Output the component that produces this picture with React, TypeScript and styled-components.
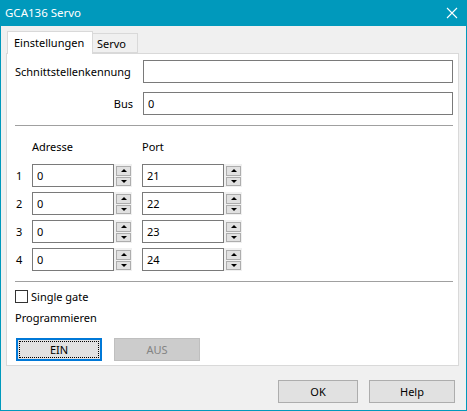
import React, { FC } from "react";
import styled, { createGlobalStyle } from "styled-components";

const GlobalStyle = createGlobalStyle`
  html, body {
    margin: 0;
    padding: 0;
    background: #ffffff;
  }
  body {
    font-family: "Noto Sans", "Liberation Sans", sans-serif;
    font-size: 11px;
    color: #000;
  }
`;

const ADDRESSES = [
  { nr: 1, adresse: "0", port: "21" },
  { nr: 2, adresse: "0", port: "22" },
  { nr: 3, adresse: "0", port: "23" },
  { nr: 4, adresse: "0", port: "24" },
];

const SpinField: FC<{ value: string }> = ({ value }) => (
  <SpinWrap>
    <Input type="text" defaultValue={value} $width={82} />
    <Spinner>
      <SpinButton>
        <Arrow $dir="up" />
      </SpinButton>
      <SpinButton>
        <Arrow $dir="down" />
      </SpinButton>
    </Spinner>
  </SpinWrap>
);

const App: FC = () => {
  return (
    <>
      <GlobalStyle />
      <Window>
        <TitleBar>
          <Title>GCA136 Servo</Title>
          <CloseIcon width="12" height="12" viewBox="0 0 12 12">
            <path d="M1 1 L11 11 M11 1 L1 11" stroke="#fff" strokeWidth="1.1" />
          </CloseIcon>
        </TitleBar>

        <Body>
          <TabStrip>
            <Tab $active $width={86}>Einstellungen</Tab>
            <Tab $width={45}>Servo</Tab>
          </TabStrip>

          <Panel>
            <FormGrid>
              <Label>Schnittstellenkennung</Label>
              <Input type="text" defaultValue="" />
              <Label $right>Bus</Label>
              <Input type="text" defaultValue="0" />
            </FormGrid>

            <Separator />

            <HeaderRow>
              <ColHeader>Adresse</ColHeader>
              <ColHeader>Port</ColHeader>
            </HeaderRow>

            <Rows>
              {ADDRESSES.map((row) => (
                <AddrRow key={row.nr}>
                  <RowNr>{row.nr}</RowNr>
                  <SpinField value={row.adresse} />
                  <SpinField value={row.port} />
                </AddrRow>
              ))}
            </Rows>

            <Separator $top={10} />

            <CheckRow>
              <CheckBox />
              <span>Single gate</span>
            </CheckRow>

            <SectionLabel>Programmieren</SectionLabel>

            <ProgRow>
              <DlgButton $focused $width={86}>
                EIN
              </DlgButton>
              <DlgButton disabled $width={86}>
                AUS
              </DlgButton>
            </ProgRow>
          </Panel>

          <Footer>
            <DlgButton $width={80}>OK</DlgButton>
            <DlgButton $width={86}>Help</DlgButton>
          </Footer>
        </Body>
      </Window>
    </>
  );
};

export default App;

const Window = styled.div`
  width: 467px;
  height: 411px;
  box-sizing: border-box;
  border: 1px solid #0099bc;
  border-top: none;
  background: #f0f0f0;
  display: flex;
  flex-direction: column;
`;

const TitleBar = styled.div`
  height: 26px;
  margin: 0 -1px;
  background: #0099bc;
  display: flex;
  align-items: center;
  justify-content: space-between;
  padding: 0 9px 0 5px;
  flex-shrink: 0;
`;

const Title = styled.span`
  color: #fff;
  font-size: 11.5px;
  padding-bottom: 1px;
`;

const CloseIcon = styled.svg`
  display: block;
`;

const Body = styled.div`
  flex: 1;
  display: flex;
  flex-direction: column;
  padding: 5px 7px 0 5px;
`;

const TabStrip = styled.div`
  display: flex;
  align-items: flex-end;
  height: 22px;
  padding-left: 1px;
  position: relative;
  z-index: 1;
`;

const Tab = styled.div<{ $active?: boolean; $width: number }>`
  box-sizing: border-box;
  width: ${(p) => p.$width}px;
  height: ${(p) => (p.$active ? "23px" : "20px")};
  margin-bottom: ${(p) => (p.$active ? "-1px" : "0")};
  padding: ${(p) => (p.$active ? "2px 0 0 6px" : "1px 0 0 4px")};
  background: ${(p) => (p.$active ? "#ffffff" : "#f0f0f0")};
  border: 1px solid #d9d9d9;
  border-bottom: ${(p) => (p.$active ? "none" : "1px solid #d9d9d9")};
  border-left: ${(p) => (p.$active ? "1px solid #d9d9d9" : "none")};
  line-height: 17px;
  white-space: nowrap;
`;

const Panel = styled.div`
  box-sizing: border-box;
  width: 453px;
  height: 313px;
  background: #ffffff;
  border: 1px solid #d9d9d9;
  padding: 6px 5px 0 8px;
  display: flex;
  flex-direction: column;
`;

const FormGrid = styled.div`
  display: grid;
  grid-template-columns: 118px 1fr;
  column-gap: 10px;
  row-gap: 9px;
  align-items: center;
`;

const Label = styled.span<{ $right?: boolean }>`
  text-align: ${(p) => (p.$right ? "right" : "left")};
`;

const Input = styled.input<{ $width?: number }>`
  box-sizing: border-box;
  height: 23px;
  width: ${(p) => (p.$width ? `${p.$width}px` : "100%")};
  border: 1px solid #7a7a7a;
  background: #fff;
  padding: 0 4px;
  font-family: inherit;
  font-size: 11px;
  color: #000;
  outline: none;
`;

const Separator = styled.div<{ $top?: number }>`
  height: 1px;
  background: #a0a0a0;
  margin: ${(p) => p.$top ?? 10}px 0 0 0;
`;

const HeaderRow = styled.div`
  display: flex;
  padding-left: 17px;
  margin-top: 11px;
  height: 18px;
  align-items: center;
`;

const ColHeader = styled.span`
  width: 110px;
`;

const Rows = styled.div`
  display: flex;
  flex-direction: column;
  gap: 5px;
  margin-top: 9px;
`;

const AddrRow = styled.div`
  display: flex;
  align-items: center;
  gap: 10px;
`;

const RowNr = styled.span`
  width: 6px;
  padding-left: 1px;
`;

const SpinWrap = styled.div`
  display: flex;
  align-items: stretch;
  width: 100px;
`;

const Spinner = styled.div`
  box-sizing: border-box;
  width: 18px;
  height: 23px;
  background: #f0f0f0;
  padding: 2px 1px 1px 2px;
  display: flex;
  flex-direction: column;
  gap: 1px;
`;

const SpinButton = styled.div`
  flex: 1;
  box-sizing: border-box;
  border: 1px solid #adadad;
  background: #e1e1e1;
  display: flex;
  align-items: center;
  justify-content: center;
`;

const Arrow = styled.span<{ $dir: "up" | "down" }>`
  width: 0;
  height: 0;
  border-left: 3px solid transparent;
  border-right: 3px solid transparent;
  ${(p) =>
    p.$dir === "up"
      ? "border-bottom: 3px solid #000;"
      : "border-top: 3px solid #000;"}
`;

const CheckRow = styled.label`
  display: flex;
  align-items: center;
  gap: 3px;
  margin-top: 7px;
  height: 14px;
`;

const CheckBox = styled.span`
  box-sizing: border-box;
  width: 13px;
  height: 13px;
  border: 1px solid #333;
  background: #fff;
`;

const SectionLabel = styled.div`
  margin-top: 6px;
  height: 18px;
  line-height: 18px;
`;

const ProgRow = styled.div`
  display: flex;
  gap: 12px;
  margin-top: 11px;
  padding-left: 1px;
`;

const DlgButton = styled.button<{ $focused?: boolean; $width: number }>`
  box-sizing: border-box;
  width: ${(p) => p.$width}px;
  height: 23px;
  font-family: inherit;
  font-size: 11px;
  color: #000;
  background: #e1e1e1;
  border: 1px solid #adadad;
  padding: 0;
  position: relative;
  ${(p) =>
    p.$focused &&
    `
    border: 2px solid #0078d7;
    &::after {
      content: "";
      position: absolute;
      inset: 1px;
      border: 1px dotted #000;
    }
  `}
  &:disabled {
    background: #cccccc;
    border-color: #bfbfbf;
    color: #838383;
  }
`;

const Footer = styled.div`
  display: flex;
  justify-content: flex-end;
  gap: 11px;
  margin-top: 14px;
  padding-right: 4px;
`;
